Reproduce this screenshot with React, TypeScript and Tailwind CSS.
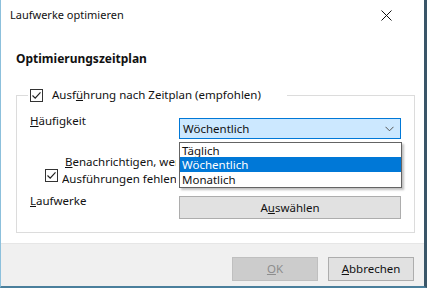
import React from 'react';

function Check({ className = '' }: { className?: string }) {
  return (
    <span
      className={`inline-flex h-[13px] w-[13px] shrink-0 items-center justify-center border border-[#333] bg-white ${className}`}
    >
      <svg width="11" height="11" viewBox="0 0 11 11">
        <path d="M1.5 5.5 L4.2 8.2 L9.5 2.3" fill="none" stroke="#222" strokeWidth="1.2" />
      </svg>
    </span>
  );
}

export default function App() {
  return (
    <div
      className="relative flex h-[288px] w-[427px] flex-col overflow-hidden border-b-2 border-l border-r-[3px] border-b-[#4a7f9c] border-l-[#8cc0dc] border-r-[#3a5668] bg-white text-[11.5px] text-[#111]"
      style={{ fontFamily: '"Segoe UI", "Noto Sans", sans-serif' }}
    >
      {/* title bar */}
      <div className="flex h-[30px] items-center justify-between pl-[9px] pr-[32px]">
        <span className="text-[11px]">Laufwerke optimieren</span>
        <svg width="11" height="11" viewBox="0 0 11 11">
          <path d="M0.5 0.5 L10.5 10.5 M10.5 0.5 L0.5 10.5" stroke="#111" strokeWidth="1" />
        </svg>
      </div>

      <div className="flex-1 px-[15px]">
        <div className="mt-[21px] h-[16px] text-[12px] font-bold leading-[16px]">Optimierungszeitplan</div>

        <fieldset className="relative mt-[20px] h-[146px] w-[398px] border border-[#dcdcdc] px-[13px]">
          <legend className="ml-[-2px] flex items-center pl-[2px] pr-[26px] leading-[16px]">
            <Check />
            <span className="ml-[9px]">
              Ausf<span className="underline">ü</span>hrung nach Zeitplan (empfohlen)
            </span>
          </legend>

          <div className="grid grid-cols-[149px_222px]">
            <div className="pt-[10px] leading-[16px]">
              <span className="underline">H</span>äufigkeit
            </div>
            <div className="pt-[15px]">
              <div className="flex h-[21px] items-center justify-between border border-[#0078d7] bg-[#cce8ff] pl-[3px] pr-[6px]">
                <span>Wöchentlich</span>
                <svg width="9" height="6" viewBox="0 0 9 6">
                  <path d="M0.5 0.8 L4.5 4.8 L8.5 0.8" fill="none" stroke="#555" strokeWidth="1" />
                </svg>
              </div>
            </div>

            <div className="col-span-2 flex items-center pl-[15px] pt-[14px]">
              <Check className="mt-[10px]" />
              <div className="ml-[4px] w-[114px] overflow-hidden whitespace-nowrap leading-[17px]">
                <div className="pl-[3px]">
                  <span className="underline">B</span>enachrichtigen, wenn drei geplante
                </div>
                <div>Ausführungen fehlen</div>
              </div>
            </div>

            <div className="pt-[6px] leading-[16px]">
              <span className="underline">L</span>aufwerke
            </div>
            <div className="pt-[9px]">
              <div className="flex h-[23px] items-center justify-center border border-[#adadad] bg-[#e1e1e1]">
                A<span className="underline">u</span>swählen
              </div>
            </div>
          </div>

          {/* open dropdown list */}
          <div className="absolute left-[162px] top-[39px] z-10 flex h-[46px] w-[223px] flex-col border border-[#646464] bg-white leading-[15px] shadow-[2px_2px_2px_rgba(0,0,0,0.25)]">
            <div className="h-[14px] pl-[2px]">Täglich</div>
            <div className="h-[15px] bg-[#0078d7] pl-[2px] text-white">Wöchentlich</div>
            <div className="h-[15px] pl-[2px]">Monatlich</div>
          </div>
        </fieldset>
      </div>

      {/* footer */}
      <div className="flex h-[43px] items-start justify-end gap-[10px] border-t border-[#e6e6e6] bg-[#f0f0f0] pr-[10px] pt-[13px]">
        <div className="flex h-[24px] w-[86px] items-center justify-center border border-[#bfbfbf] bg-[#cccccc] text-[#8d8d8d]">
          <span className="underline">O</span>K
        </div>
        <div className="flex h-[24px] w-[86px] items-center justify-center border border-[#adadad] bg-[#e1e1e1]">
          <span className="underline">A</span>bbrechen
        </div>
      </div>
    </div>
  );
}
